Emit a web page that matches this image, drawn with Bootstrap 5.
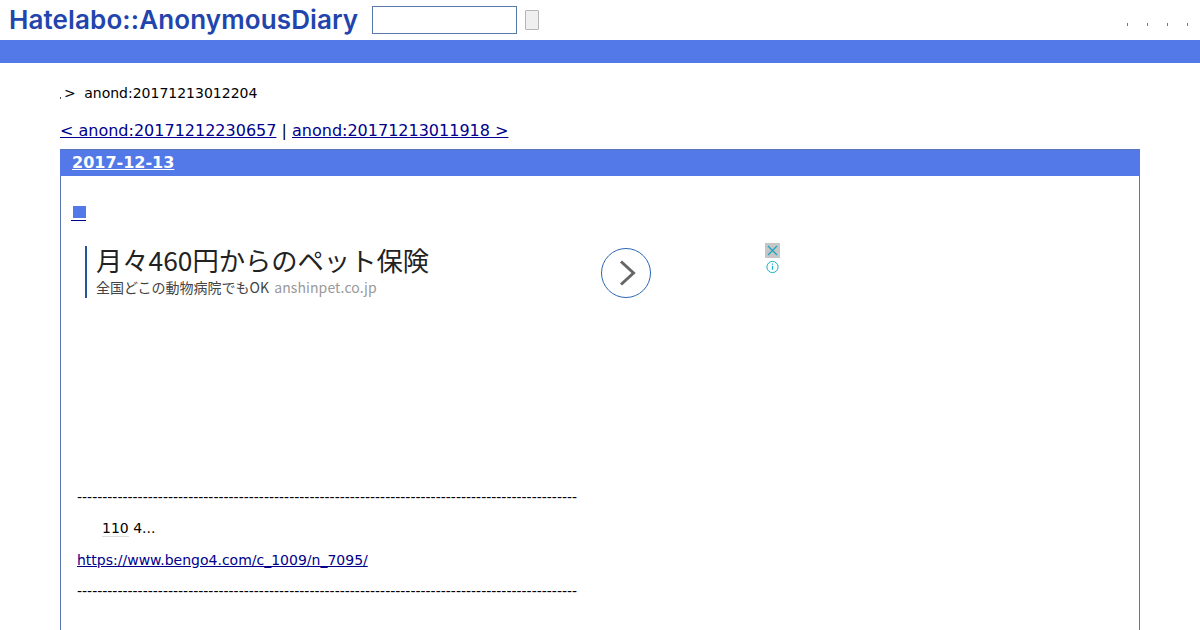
<!DOCTYPE html>
<html lang="ja">
<head>
<meta charset="utf-8">
<title>anond:20171213012204</title>
<link href="https://cdn.jsdelivr.net/npm/bootstrap@5.3.0/dist/css/bootstrap.min.css" rel="stylesheet">
<style>
html,body{height:630px;overflow:hidden}
body{font-family:"DejaVu Sans",sans-serif;color:#000;background:#fff;font-size:14px;line-height:1.2}
a{color:#00008b}
.hd{height:40px;padding-left:9px}
.logo{font-family:"Inter",sans-serif;font-weight:600;font-size:26px;color:#2244ad;line-height:40px;width:363px;white-space:nowrap;letter-spacing:.12px}
.sbox{width:145px;height:28px;border:1px solid #5b78ad;background:#fff;margin-right:8px}
.sbtn{width:14px;height:20px;border:1px solid #b5b5b5;background:#efefef;border-radius:1px}
.ticks{gap:19px;padding-right:12px;padding-top:8px}
.tick{width:1px;height:3px;background:#777}
.band{height:23px;background:#5279e7}
.crumb{padding:22px 60px 0;height:58px;font-size:14px}
.crumb i{display:inline-block;width:1px;height:2px;background:#555;margin-right:3px;vertical-align:-1px}
.crumb .gt{margin-right:4px}
.pager{padding:0 60px;font-size:16px;height:19px;line-height:19px;margin-bottom:9px}
.dayb{margin:0 60px;border:1px solid #5b76b8;border-bottom:0;height:481px}
.dayh{height:26px;background:#5279e7;line-height:26px;font-size:16px;font-weight:700;margin:0 -1px;padding-left:12px}
.dayh a{color:#fff}
.sect{padding:29px 0 0 10px;height:64px}
.sq{display:block;width:15px;height:15px;border-bottom:1px solid #00008b}
.sq::before{content:"";display:block;width:13px;height:12px;background:#5279e7;margin:1px 0 0 2px}
.adw{position:relative;height:249px;padding:6px 0 0 24px;width:720px}
.adrow{display:flex;align-items:center;width:566px;justify-content:space-between}
.adtxt{border-left:2px solid #22559c;height:52px;padding-left:9px;font-family:"Noto Sans CJK JP",sans-serif;white-space:nowrap}
.adt{font-size:26.3px;line-height:27px;color:#222}
.ads{font-size:14px;line-height:21px;color:#444;margin-top:4px}
.ads span{color:#999;letter-spacing:.1px;margin-left:2px}
.adgo{width:50px;height:50px;margin-top:2px}
.adi{position:absolute;left:704px;top:3px;width:15px;height:32px}
.body{padding-left:16px;font-size:14px;line-height:17px}
.body p{margin:0;white-space:nowrap}
.p1{height:31px;padding-top:14px}
.p2{height:32px;padding-top:15px}
.p3{height:31px;padding-top:14px}
.ind{padding-left:25px}
.u{border-bottom:1px solid #ddd}
</style>
</head>
<body>
<header class="hd d-flex align-items-center">
  <div class="logo">Hatelabo::AnonymousDiary</div>
  <div class="sbox"></div>
  <div class="sbtn"></div>
  <div class="ticks ms-auto d-flex"><span class="tick"></span><span class="tick"></span><span class="tick"></span><span class="tick"></span></div>
</header>
<div class="band"></div>
<div class="crumb"><i></i><span class="gt">&gt;</span> anond:20171213012204</div>
<div class="pager"><a href="#">&lt; anond:20171212230657</a> | <a href="#">anond:20171213011918 &gt;</a></div>
<div class="dayb">
  <div class="dayh"><a href="#">2017-12-13</a></div>
  <div class="sect"><a href="#" class="sq"></a></div>
  <div class="adw">
    <div class="adrow">
      <div class="adtxt">
        <div class="adt">月々460円からのペット保険</div>
        <div class="ads">全国どこの動物病院でもOK <span>anshinpet.co.jp</span></div>
      </div>
      <svg class="adgo" viewBox="0 0 50 50"><circle cx="25" cy="25" r="24.5" fill="#fff" stroke="#2a66b5" stroke-width="1"/><path d="M20 13.5 32.5 25 20 36.5" fill="none" stroke="#666" stroke-width="3"/></svg>
    </div>
    <svg class="adi" viewBox="0 0 15 32"><rect width="15" height="15" fill="#c6c6c6"/><path d="M3 3 12 12M12 3 3 12" stroke="#16a5c4" stroke-width="1.2"/><circle cx="7.5" cy="24" r="5.6" fill="#fff" stroke="#16b3cc"/><path d="M7.5 22.8v4M7.5 20.6v1.1" stroke="#16b3cc" stroke-width="1.2"/></svg>
  </div>
  <div class="body">
    <p>---------------------------------------------------------------------------------------------------</p>
    <p class="p1 ind"><span class="u">110</span> 4...</p>
    <p class="p2"><a href="#">https://www.bengo4.com/c_1009/n_7095/</a></p>
    <p class="p3">---------------------------------------------------------------------------------------------------</p>
  </div>
</div>
</body>
</html>
